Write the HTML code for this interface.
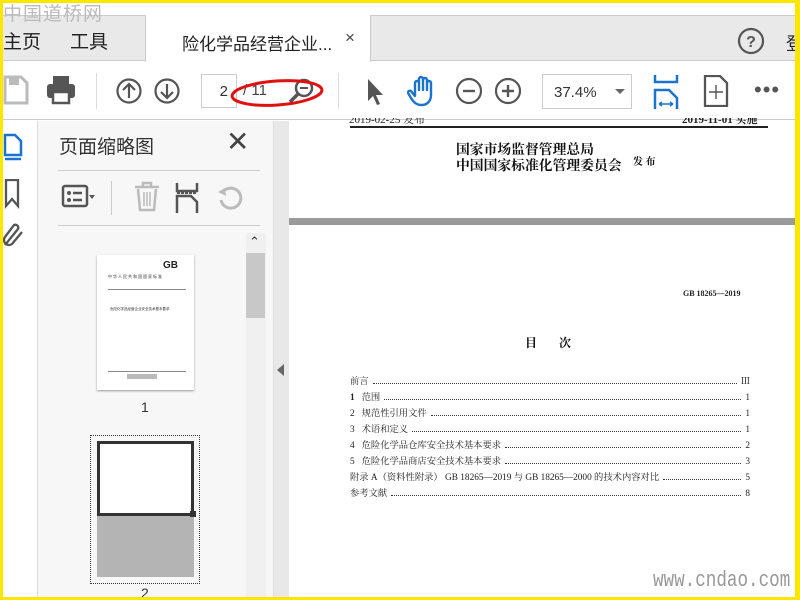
<!DOCTYPE html>
<html><head><meta charset="utf-8"><style>
*{margin:0;padding:0;box-sizing:border-box}
body{width:800px;height:600px;overflow:hidden;background:#ffe600;position:relative;font-family:"Liberation Sans","Noto Sans CJK SC",sans-serif}
.a{position:absolute}
.serif{font-family:"Liberation Serif","Noto Serif CJK SC",serif}
.dots{border-bottom:1.5px dotted #333;flex:1;margin:0 4px 3px}
.row{position:absolute;left:350px;width:400px;display:flex;align-items:flex-end;font-size:9.3px;color:#222;height:12px}
</style></head><body>
<div class="a" style="left:3px;top:3px;width:792px;height:594px;background:#fff;overflow:hidden">
 <div class="a" style="left:0;top:12px;width:792px;height:46px;background:#e9e9e9;border-top:1px solid #ccc;border-bottom:1px solid #ccc"></div>
 <div class="a" style="left:0;top:-4px;font-size:19px;color:#bbb;letter-spacing:1px" >中国道桥网</div>
 <div class="a" style="left:0;top:24px;font-size:19px;color:#222">主页</div>
 <div class="a" style="left:67px;top:24px;font-size:19px;color:#222">工具</div>
 <div class="a" style="left:142px;top:12px;width:226px;height:47px;background:#fff;border-left:1px solid #ccc;border-right:1px solid #ccc"></div>
 <div class="a" style="left:179px;top:27px;font-size:17px;color:#222">险化学品经营企业...</div>
 <div class="a" style="left:342px;top:25px;font-size:17px;color:#444">×</div>
 <svg class="a" style="left:733px;top:23px" width="30" height="30"><circle cx="15" cy="15" r="12" fill="none" stroke="#555" stroke-width="2.2"/><text x="15" y="21" text-anchor="middle" font-size="16" font-weight="bold" fill="#555" font-family="Liberation Sans">?</text></svg>
 <div class="a" style="left:783px;top:27px;font-size:18px;color:#222">登</div>
 <div class="a" style="left:0;top:59px;width:792px;height:58px;background:#fff;border-bottom:1px solid #ccc"></div>
 <svg class="a" style="left:0;top:70px" width="26" height="34"><path d="M2 4h16l6 6v20H2z" fill="none" stroke="#bbb" stroke-width="3"/><rect x="6" y="4" width="10" height="8" fill="#bbb"/></svg>
 <svg class="a" style="left:43px;top:72px" width="30" height="30"><rect x="7" y="1" width="16" height="8" fill="#555"/><rect x="1" y="9" width="28" height="14" rx="3" fill="#555"/><rect x="7" y="17" width="16" height="11" fill="#fff" stroke="#555" stroke-width="2.5"/></svg>
 <div class="a" style="left:93px;top:70px;width:1px;height:36px;background:#ddd"></div>
 <svg class="a" style="left:113px;top:73px" width="32" height="32"><circle cx="13" cy="15" r="11.5" fill="none" stroke="#555" stroke-width="2.2"/><path d="M13 22V8M7 14l6-6 6 6" fill="none" stroke="#555" stroke-width="2.2"/></svg>
 <svg class="a" style="left:151px;top:73px" width="32" height="32"><circle cx="13" cy="15" r="11.5" fill="none" stroke="#555" stroke-width="2.2"/><path d="M13 8v14M7 16l6 6 6-6" fill="none" stroke="#555" stroke-width="2.2"/></svg>
 <div class="a" style="left:198px;top:71px;width:36px;height:34px;border:1px solid #ccc;font-size:15px;color:#333;text-align:right;padding:8px 8px 0 0">2</div>
 <div class="a" style="left:240px;top:79px;font-size:15px;color:#444">/ 11</div>
 <svg class="a" style="left:283px;top:72px" width="34" height="34"><circle cx="18" cy="13" r="8" fill="none" stroke="#555" stroke-width="2.5"/><path d="M12 19l-8 8" stroke="#555" stroke-width="3.5"/><path d="M14 13h8" stroke="#555" stroke-width="2"/></svg>
 <svg class="a" style="left:224px;top:72px" width="100" height="36"><ellipse cx="50" cy="18" rx="45" ry="12" fill="none" stroke="#e01010" stroke-width="3" transform="rotate(-4 50 18)"/></svg>
 <div class="a" style="left:335px;top:70px;width:1px;height:36px;background:#ddd"></div>
 <svg class="a" style="left:362px;top:75px" width="20" height="28"><path d="M3 1v22l5-5 4 9 3-1-4-9h7z" fill="#555"/></svg>
 <svg class="a" style="left:404px;top:71px" width="32" height="34"><path d="M8 22V9a2 2 0 014 0v7V5a2 2 0 014 0v11V6a2 2 0 014 0v10V9a2 2 0 014 0v12c0 6-4 10-9 10s-8-2-11-7l-3-5a2 2 0 013-2z" fill="none" stroke="#1b73d0" stroke-width="2.4" stroke-linejoin="round"/></svg>
 <svg class="a" style="left:452px;top:73px" width="30" height="30"><circle cx="14" cy="15" r="12" fill="none" stroke="#555" stroke-width="2.2"/><path d="M8 15h12" stroke="#555" stroke-width="2.4"/></svg>
 <svg class="a" style="left:491px;top:73px" width="30" height="30"><circle cx="14" cy="15" r="12" fill="none" stroke="#555" stroke-width="2.2"/><path d="M8 15h12M14 9v12" stroke="#555" stroke-width="2.4"/></svg>
 <div class="a" style="left:539px;top:71px;width:90px;height:35px;border:1px solid #ccc;font-size:15px;color:#333;padding:9px 0 0 11px">37.4%</div>
 <div class="a" style="left:612px;top:86px;border-left:5px solid transparent;border-right:5px solid transparent;border-top:5px solid #666"></div>
 <svg class="a" style="left:650px;top:72px" width="26" height="34"><path d="M2 0v7h22V0" fill="none" stroke="#1b73d0" stroke-width="2.5"/><path d="M2 34V15h14l8 8v11" fill="none" stroke="#1b73d0" stroke-width="2.5"/><path d="M6 29h14M6 29l3-2M6 29l3 2M20 29l-3-2M20 29l-3 2" stroke="#1b73d0" stroke-width="1.5"/></svg>
 <svg class="a" style="left:700px;top:72px" width="26" height="32"><path d="M2 1h15l7 7v23H2z" fill="none" stroke="#555" stroke-width="2.3"/><path d="M13 10v14M6 17h14" stroke="#555" stroke-width="1.4"/></svg>
 <div class="a" style="left:751px;top:74px;font-size:22px;color:#555;letter-spacing:1px">•••</div>
 <div class="a" style="left:0;top:118px;width:35px;height:476px;background:#fff;border-right:1px solid #ddd"></div>
 <svg class="a" style="left:0;top:130px" width="22" height="30"><path d="M2 2h10l6 6v14H2z" fill="none" stroke="#1b73d0" stroke-width="2.5"/><path d="M2 26h16" stroke="#1b73d0" stroke-width="2.5"/></svg>
 <svg class="a" style="left:0;top:176px" width="20" height="30"><path d="M3 1h12v26l-6-7-6 7z" fill="none" stroke="#555" stroke-width="2.3"/></svg>
 <svg class="a" style="left:0;top:218px" width="22" height="30"><path d="M2 24L15 8a3 3 0 00-4-4L2 16a5 5 0 007 7l10-12" fill="none" stroke="#555" stroke-width="2.3"/></svg>
 <div class="a" style="left:35px;top:118px;width:235px;height:476px;background:#f7f7f7"></div>
 <div class="a" style="left:56px;top:129px;font-size:19px;color:#333">页面缩略图</div>
 <div class="a" style="left:223px;top:122px;font-size:28px;color:#444;font-weight:300">✕</div>
 <div class="a" style="left:55px;top:167px;width:202px;height:1px;background:#ccc"></div>
 <svg class="a" style="left:58px;top:180px" width="40" height="28"><rect x="2" y="3" width="24" height="20" rx="2" fill="none" stroke="#555" stroke-width="2.5"/><circle cx="8" cy="10" r="2" fill="#555"/><circle cx="8" cy="17" r="2" fill="#555"/><path d="M12 10h9M12 17h9" stroke="#555" stroke-width="2.5"/><path d="M28 12h6l-3 4z" fill="#555"/></svg>
 <div class="a" style="left:108px;top:178px;width:1px;height:34px;background:#ccc"></div>
 <svg class="a" style="left:130px;top:178px" width="28" height="32"><path d="M2 6h24M10 6V2h8v4M5 8l2 21h14l2-21" fill="none" stroke="#bbb" stroke-width="2.5"/><path d="M11 11v14M14 11v14M17 11v14" stroke="#bbb" stroke-width="1.5"/></svg>
 <svg class="a" style="left:172px;top:180px" width="24" height="30"><path d="M2 0v8h20V0M2 30V13h14l6 6v11" fill="none" stroke="#555" stroke-width="2.5"/><path d="M2 10h20" stroke="#555" stroke-width="2" stroke-dasharray="3 1"/></svg>
 <svg class="a" style="left:212px;top:181px" width="30" height="28"><path d="M6 16a10 10 0 1 0 4-10" fill="none" stroke="#bbb" stroke-width="3"/><path d="M3 8l7-4 1 8z" fill="#bbb"/></svg>
 <div class="a" style="left:55px;top:222px;width:202px;height:1px;background:#ccc"></div>
 <div class="a" style="left:243px;top:230px;width:20px;height:364px;background:#f0f0f0"></div>
 <div class="a" style="left:243px;top:250px;width:19px;height:65px;background:#c8c8c8"></div>
 <div class="a" style="left:246px;top:231px;font-size:13px;color:#333">⌃</div>
 <div class="a" style="left:94px;top:252px;width:97px;height:135px;background:#fff;box-shadow:0 1px 2px #999;overflow:hidden">
  <div class="a" style="left:66px;top:5px;font-size:10px;font-weight:bold;color:#222">GB</div>
  <div class="a" style="left:11px;top:19px;font-size:4px;color:#333;letter-spacing:1px">中华人民共和国国家标准</div>
  <div class="a" style="left:11px;top:34px;width:78px;height:1px;background:#888"></div>
  <div class="a" style="left:13px;top:52px;font-size:3.5px;color:#333">危险化学品经营企业安全技术基本要求</div>
  <div class="a" style="left:11px;top:116px;width:78px;height:1px;background:#888"></div>
  <div class="a" style="left:30px;top:119px;width:30px;height:5px;background:#bbb"></div>
 </div>
 <div class="a" style="left:138px;top:396px;font-size:14px;color:#333">1</div>
 <div class="a" style="left:87px;top:432px;width:110px;height:149px;border:1px dotted #333"></div>
 <div class="a" style="left:94px;top:438px;width:97px;height:136px;background:#b4b4b4"></div>
 <div class="a" style="left:94px;top:438px;width:97px;height:75px;background:#fff;border:3px solid #333"></div>
 <div class="a" style="left:187px;top:508px;width:6px;height:6px;background:#333"></div>
 <div class="a" style="left:138px;top:582px;font-size:14px;color:#333">2</div>
 <div class="a" style="left:270px;top:118px;width:16px;height:476px;background:#e8e8e8;border-left:1px solid #ddd"></div>
 <div class="a" style="left:274px;top:361px;border-top:6px solid transparent;border-bottom:6px solid transparent;border-right:7px solid #666"></div>
 <div class="a" style="left:286px;top:115px;width:506px;height:12px;overflow:hidden">
  <div class="a serif" style="left:60px;top:-7px;font-size:11px;color:#222">2019-02-25 发布</div>
  <div class="a serif" style="left:393px;top:-7px;font-size:11px;color:#222;font-weight:bold">2019-11-01 实施</div>
 </div>
 <div class="a" style="left:347px;top:123px;width:418px;height:1.5px;background:#222"></div>
 <div class="a serif" style="left:453px;top:139px;font-size:13.8px;line-height:16px;color:#111;font-weight:bold">国家市场监督管理总局<br>中国国家标准化管理委员会</div>
 <div class="a serif" style="left:630px;top:150px;font-size:10px;color:#111;font-weight:bold">发 布</div>
 <div class="a" style="left:286px;top:215px;width:506px;height:7px;background:#9a9a9a"></div>
 <div class="a serif" style="left:680px;top:286px;font-size:8px;color:#222;font-weight:bold">GB 18265—2019</div>
 <div class="a serif" style="left:522px;top:331px;font-size:12px;color:#111;font-weight:bold;letter-spacing:22px">目次</div>
 <div class="row serif" style="top:372px;left:347px"><span>前言</span><span class="dots"></span><span>Ⅲ</span></div>
 <div class="row serif" style="top:388px;left:347px"><span><b>1</b>&nbsp;&nbsp; 范围</span><span class="dots"></span><span>1</span></div>
 <div class="row serif" style="top:404px;left:347px"><span>2&nbsp;&nbsp; 规范性引用文件</span><span class="dots"></span><span>1</span></div>
 <div class="row serif" style="top:420px;left:347px"><span>3&nbsp;&nbsp; 术语和定义</span><span class="dots"></span><span>1</span></div>
 <div class="row serif" style="top:436px;left:347px"><span>4&nbsp;&nbsp; 危险化学品仓库安全技术基本要求</span><span class="dots"></span><span>2</span></div>
 <div class="row serif" style="top:452px;left:347px"><span>5&nbsp;&nbsp; 危险化学品商店安全技术基本要求</span><span class="dots"></span><span>3</span></div>
 <div class="row serif" style="top:468px;left:347px"><span>附录 A（资料性附录） GB 18265—2019 与 GB 18265—2000 的技术内容对比</span><span class="dots"></span><span>5</span></div>
 <div class="row serif" style="top:484px;left:347px"><span>参考文献</span><span class="dots"></span><span>8</span></div>
 <div class="a" style="left:650px;top:565px;font-family:'Liberation Mono',monospace;font-size:22px;color:#999;transform:scaleX(0.8);transform-origin:left">www.cndao.com</div>
</div>
</body></html>
